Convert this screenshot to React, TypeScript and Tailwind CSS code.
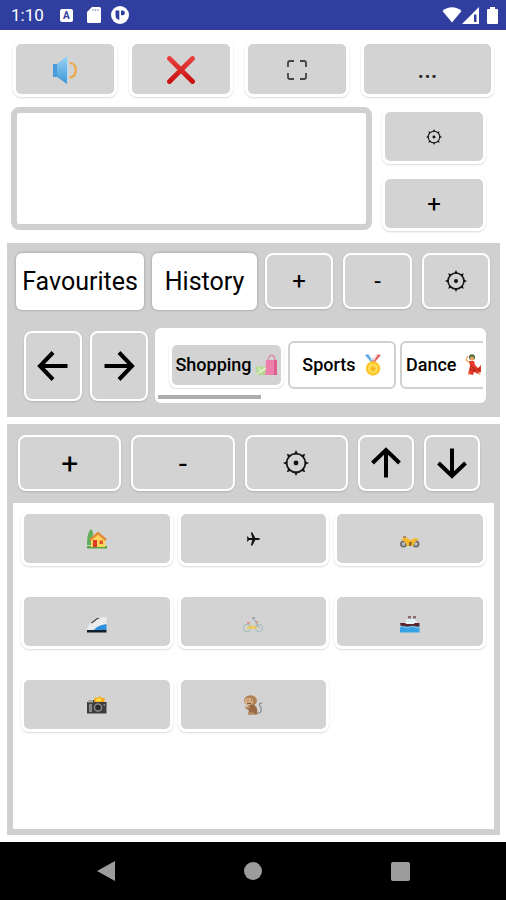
import type { ReactNode } from 'react'
import clsx from 'clsx'

interface KeyProps {
  label: string
  children: ReactNode
  className?: string
  thin?: boolean
}

function Key({ label, children, className, thin }: KeyProps) {
  return (
    <button
      type="button"
      aria-label={label}
      className={clsx(
        'flex items-center justify-center rounded-lg border-white bg-[#d3d3d3] text-black',
        thin
          ? 'border-2 shadow-[0_1px_2px_rgba(0,0,0,0.15)]'
          : 'border-[3px] shadow-[0_1px_2px_rgba(0,0,0,0.15)]',
        className
      )}
    >
      {children}
    </button>
  )
}

function GearIcon({ className }: { className: string }) {
  const angles = [0, 45, 90, 135, 180, 225, 270, 315]
  return (
    <svg viewBox="0 0 26 26" className={className} aria-hidden="true">
      <circle cx="13" cy="13" r="9.4" fill="none" stroke="#1a1a1a" strokeWidth="1.8" />
      <circle cx="13" cy="13" r="2.4" fill="#111" />
      {angles.map((a) => (
        <path key={a} d="M11 4.2 13 0l2 4.2z" fill="#111" transform={`rotate(${a} 13 13)`} />
      ))}
    </svg>
  )
}

function ArrowIcon({ direction }: { direction: 'left' | 'right' | 'up' | 'down' }) {
  const rotation = { right: 0, down: 90, left: 180, up: 270 }[direction]
  return (
    <svg viewBox="0 0 32 32" className="size-8" aria-hidden="true">
      <path
        d="M1.5 16h27M16 2.5 29 16 16 29.5"
        fill="none"
        stroke="#000"
        strokeWidth="4"
        transform={`rotate(${rotation} 16 16)`}
      />
    </svg>
  )
}

function SpeakerIcon() {
  return (
    <svg viewBox="0 0 26 30" className="h-[30px] w-[26px]" aria-hidden="true">
      <defs>
        <linearGradient id="cone" x1="0" y1="0" x2="0" y2="1">
          <stop offset="0" stopColor="#9ad4f6" />
          <stop offset="1" stopColor="#3d97d8" />
        </linearGradient>
      </defs>
      <path d="M1 9h5v13H1z" fill="#4a9bd9" />
      <path d="M5 9 15 1v28L5 22z" fill="url(#cone)" />
      <path d="M15 1c1.5 4 1.5 24 0 28z" fill="#b9dcf2" />
      <path d="M18.500 8c7 1 7 13 0 14.500" fill="none" stroke="#eba843" strokeWidth="2.2" strokeLinecap="round" />
    </svg>
  )
}

function CrossIcon() {
  return (
    <svg viewBox="0 0 28 28" className="size-7" aria-hidden="true">
      <defs>
        <linearGradient id="cross" x1="0" y1="0" x2="0" y2="28" gradientUnits="userSpaceOnUse">
          <stop offset="0" stopColor="#ea4444" />
          <stop offset="1" stopColor="#c80c0c" />
        </linearGradient>
      </defs>
      <path d="m2.500 2.500 23 23M25.500 2.500l-23 23" stroke="url(#cross)" strokeWidth="4.800" strokeLinecap="round" />
    </svg>
  )
}

function FullscreenIcon() {
  return (
    <svg viewBox="0 0 20 20" className="size-5" fill="none" stroke="#444" strokeWidth="1.8" aria-hidden="true">
      <path d="M1 7V3q0-2 2-2h4M13 1h4q2 0 2 2v4M19 13v4q0 2-2 2h-4M7 19H3q-2 0-2-2v-4" />
    </svg>
  )
}

function BagsIcon() {
  return (
    <svg viewBox="0 0 22 22" className="size-[22px]" aria-hidden="true">
      <path d="M12 8c0-9 7-9 7 0" fill="none" stroke="#d98aa8" strokeWidth="1.3" />
      <path d="M10 6h11v15H9z" fill="#ee7fab" />
      <path d="M18 6h3v15h-3z" fill="#de5f92" />
      <path d="m0 12 10 1-1 8H1z" fill="#b3d98c" />
      <path d="m2 13 3 5 5-4M1 20l8-6" fill="none" stroke="#e3f1cf" strokeWidth="1.2" />
    </svg>
  )
}

function MedalIcon() {
  return (
    <svg viewBox="0 0 18 22" className="h-[22px] w-[18px]" aria-hidden="true">
      <path d="m1 1 4-1 6 8H7z" fill="#5aa5e6" />
      <path d="m17 1-4-1-6 8h4z" fill="#e3685e" />
      <path d="m4 0 2 0 3 6-1 1z" fill="#e8f0f8" />
      <path d="m14 0-2 0-3 6 1 1z" fill="#f6e2e2" />
      <circle cx="9" cy="14.5" r="7.2" fill="#fcc52c" />
      <circle cx="9" cy="14.500" r="5" fill="#ffdd52" />
      <path d="m9 11 1 2.500 2.600.2-2 1.700.6 2.600L9 16.600 6.800 18l.6-2.600-2-1.700 2.600-.2z" fill="#f6b520" />
    </svg>
  )
}

function DancerIcon() {
  return (
    <svg viewBox="0 0 18 22" className="h-[22px] w-[18px] shrink-0" aria-hidden="true">
      <circle cx="7" cy="3.2" r="3" fill="#4f6b35" />
      <circle cx="7" cy="4.500" r="2" fill="#f0a468" />
      <path d="M3 2 1 6l4 3" fill="none" stroke="#f0b478" strokeWidth="1.5" />
      <path d="M4 7h5l1 4 3 3 3-3v7l-3 2-4-2-1 3-5-1 2-8z" fill="#e23b2c" />
      <path d="M6 12l6 5M5 15l5 2M13 14l2 4" stroke="#a81f18" strokeWidth="1" />
      <path d="m4 19-1 2M14 18l1 3" stroke="#f0b478" strokeWidth="1.4" />
    </svg>
  )
}

function HouseIcon() {
  return (
    <svg viewBox="0 0 20 20" className="size-5" aria-hidden="true">
      <path d="M4 0C1 3 0 8 0 16h6V3z" fill="#5fae58" />
      <path d="M0 17h20v2.5H0z" fill="#5da542" />
      <path d="M4 9.500 11 4l7 5.500V18H4z" fill="#ffd45a" />
      <path d="m3 11 8-7 8 7" fill="none" stroke="#e08a3c" strokeWidth="2.400" />
      <path d="M6 11h4v7H6z" fill="#dc3a26" />
      <path d="M12.500 11.500H16V15h-3.500z" fill="#e0562c" />
    </svg>
  )
}

function PlaneIcon() {
  return (
    <svg viewBox="0 0 14 14" className="size-3.5" aria-hidden="true">
      <path
        d="M14 7c0 .7-1.200.9-2.500.9H9.300L6.400 13.500H4.800L6.300 7.900H3L1.700 9.500H.9l.500-2.500-.5-2.500h.8L3 6.100h3.300L4.800.5h1.600l2.900 5.600h2.200C12.800 6.100 14 6.300 14 7z"
        fill="#111"
      />
    </svg>
  )
}

function MotorcycleIcon() {
  return (
    <svg viewBox="0 0 20 12" className="h-3 w-5" aria-hidden="true">
      <g fill="#b5b5b5" stroke="#666" strokeWidth="1.5">
        <circle cx="3.500" cy="8" r="2.700" />
        <circle cx="16" cy="8" r="2.700" />
      </g>
      <path d="M1 3.500 6 1l4 3 5-2 4 1-4 3-2 4H7L5 6z" fill="#f5b930" />
      <path d="M9 6h3l-1 4H9z" fill="#8a6326" />
      <path d="m3 1 3 0" fill="none" stroke="#8a6326" strokeWidth="1.2" />
    </svg>
  )
}

function TrainIcon() {
  return (
    <svg viewBox="0 0 20 16" className="h-4 w-5" aria-hidden="true">
      <path d="M0 12C3 4 9 0 19.500 0v14H0z" fill="#e9ebec" />
      <path d="M7 13c2-3 6-5 12.500-6v6z" fill="#2d8fdc" />
      <path d="m4 5.500 6-4.500 3 0-3 1.500-5 4z" fill="#444" />
      <path d="M0 13h19.5v2.5H0z" fill="#111e2c" />
    </svg>
  )
}

function BicycleIcon() {
  return (
    <svg viewBox="0 0 20 16" className="h-4 w-5" fill="none" aria-hidden="true">
      <circle cx="4" cy="11" r="3.5" stroke="#a3bdb2" strokeWidth="1.1" />
      <circle cx="16" cy="11" r="3.5" stroke="#a9bcc2" strokeWidth="1.1" />
      <path d="m4 11 5-2 5 2H9z" stroke="#eecb58" strokeWidth="1.6" />
      <path d="m16 11-5-9" stroke="#9cb6c4" strokeWidth="1.2" />
      <path d="M9 1h3" stroke="#888" strokeWidth="1.2" />
      <path d="m12.500 4 2.500 2M4 6h3" stroke="#e08a74" strokeWidth="1.400" />
    </svg>
  )
}

function ShipIcon() {
  return (
    <svg viewBox="0 0 20 17" className="h-[17px] w-5" aria-hidden="true">
      <path d="M4 8 7 3h8l3 5z" fill="#dceef0" />
      <path d="M8 0h3v2.5H8zM13 0h3v2.500h-3z" fill="#8a6c72" />
      <path d="M0 7h19.5v4H1z" fill="#5b2630" />
      <path d="M5 6h10l-1 2H6z" fill="#e8f4f6" />
      <path d="M0 10.500h19.500v6H0z" fill="#35a3e4" />
      <path d="M0 11q2.500-1.500 5 0t5 0 5 0 4.500 0" fill="none" stroke="#8ccdf2" strokeWidth="1" />
    </svg>
  )
}

function CameraIcon() {
  return (
    <svg viewBox="0 0 20 18" className="h-[18px] w-5" aria-hidden="true">
      <path d="M0 6h4l2-2h8l2 2h3.5v11.500H0z" fill="#3d3d3d" />
      <path d="M1 4h5v2.500H1z" fill="#aaa" />
      <path d="m8 1 3 1 2-2 2 2 3 0-1 4H7z" fill="#fba91c" />
      <path d="m9 3 5-1v3.500H9z" fill="#ffdf3d" />
      <circle cx="11" cy="11.500" r="4.300" fill="#8a8a8a" />
      <circle cx="11" cy="11.500" r="2.800" fill="#292929" />
      <path d="M2 8h3v8H2zM16.500 8H18v2h-1.500z" fill="#888" />
    </svg>
  )
}

function MonkeyIcon() {
  return (
    <svg viewBox="0 0 20 20" className="size-5" aria-hidden="true">
      <path d="M14 18c5 1 5-5 3-7s1-4 2-2" fill="none" stroke="#8d8d8d" strokeWidth="1.2" />
      <ellipse cx="7.500" cy="5.500" rx="6.500" ry="5.300" fill="#b08258" />
      <ellipse cx="5.800" cy="6.500" rx="4.200" ry="3.400" fill="#dcb389" />
      <path d="M4.500 5.200h1M8 5.200h1M4 8q2 1 4 0" fill="none" stroke="#6d4628" strokeWidth="1" />
      <path d="M7 10c7-1 8 4 7 9.500H5l1-4-3-2z" fill="#996a45" />
      <path d="M2 12.500h5M5 18.500h6" stroke="#bd9068" strokeWidth="2" />
    </svg>
  )
}

function StatusBar() {
  return (
    <header className="flex h-[30px] items-center justify-between bg-[#303f9f] pr-2 pl-[11px] text-white">
      <div className="flex items-center gap-4">
        <span className="text-[17px] leading-5">1:10</span>
        <div className="flex items-center gap-3.5">
          <span className="flex size-[13px] items-center justify-center rounded-xs bg-white text-[10px] font-bold text-[#303f9f]">
            A
          </span>
          <svg viewBox="0 0 14 16" className="h-4 w-3.5" aria-hidden="true">
            <path d="M5 0h7.500Q14 0 14 1.500v13q0 1.500-1.500 1.500h-11Q0 16 0 14.500V5z" fill="#fff" />
            <path d="M6 2v2M8.500 2v2M11 2v2" stroke="#9ba3d6" strokeWidth="1.200" />
          </svg>
          <svg viewBox="0 0 18 18" className="-ml-1 size-[18px]" aria-hidden="true">
            <circle cx="9" cy="9" r="9" fill="#fff" />
            <path d="M4.500 4.500h3.800v9.500C5.500 13.500 4.500 11.500 4.500 9zM10 4.500h1.500a2.300 2.300 0 0 1 0 4.800H10z" fill="#303f9f" />
          </svg>
        </div>
      </div>
      <div className="flex items-center">
        <svg viewBox="0 0 20 16" className="h-4 w-5" aria-hidden="true">
          <path d="M.5 4C6-1 14-1 19.500 4L10 15.500z" fill="#fff" />
        </svg>
        <svg viewBox="0 0 17 17" className="mr-2 h-[17px] w-[17px]" aria-hidden="true">
          <path d="M0 17 17 0v17z" fill="#fff" />
          <path d="M12 7.500h2.500V15H12z" fill="#303f9f" />
        </svg>
        <svg viewBox="0 0 11 17" className="h-[17px] w-[11px]" aria-hidden="true">
          <path d="M3 0h5v2h2q1 0 1 1v13q0 1-1 1H1q-1 0-1-1V3q0-1 1-1h2z" fill="#fff" />
        </svg>
      </div>
    </header>
  )
}

const vehicles = [
  { name: 'Home', icon: <HouseIcon /> },
  { name: 'Plane', icon: <PlaneIcon /> },
  { name: 'Motorcycle', icon: <MotorcycleIcon />, low: true },
  { name: 'Train', icon: <TrainIcon />, low: true },
  { name: 'Bicycle', icon: <BicycleIcon />, low: true },
  { name: 'Ship', icon: <ShipIcon />, low: true },
  { name: 'Camera', icon: <CameraIcon /> },
  { name: 'Monkey', icon: <MonkeyIcon /> },
]

export default function App() {
  return (
    <div className="flex min-h-screen flex-col bg-white font-[Roboto,sans-serif] text-black">
      <StatusBar />

      <main className="flex flex-1 flex-col pt-[11px] pb-[7px]">
        <div className="grid grid-cols-[104fr_104fr_104fr_133fr] gap-3 pr-3 pl-[13px]">
          <Key label="Speak" className="h-14 pt-0.5"><SpeakerIcon /></Key>
          <Key label="Clear" className="h-14 pt-0.5"><CrossIcon /></Key>
          <Key label="Fullscreen" className="h-14 pt-0.5"><FullscreenIcon /></Key>
          <Key label="More" className="h-14 pt-0.5 text-2xl font-medium text-neutral-800">...</Key>
        </div>

        <div className="mt-2.5 flex gap-2.5 pr-5 pl-[11px]">
          <textarea
            aria-label="Message"
            className="h-[123px] min-w-0 flex-1 resize-none rounded-lg border-[6px] border-[#d0d0d0] bg-white p-2 text-xl outline-none"
          />
          <div className="flex w-[104px] flex-col gap-3 pt-0.5">
            <Key label="Message settings" className="h-[55px]"><GearIcon className="size-4" /></Key>
            <Key label="Add message" className="h-[55px] text-2xl">+</Key>
          </div>
        </div>

        {/* Category panel */}
        <section className="mr-1.5 ml-[7px] mt-3 bg-[#d0d0d0] pt-2.5 pr-2.5 pb-3.5 pl-[9px]">
          <div className="flex gap-2">
            <button type="button" className="h-[57px] w-32 rounded-md bg-white text-[25px] shadow-[0_0_3px_rgba(0,0,0,0.3)]">
              Favourites
            </button>
            <button type="button" className="h-[57px] w-[105px] rounded-md bg-white text-[25px] shadow-[0_0_3px_rgba(0,0,0,0.3)]">
              History
            </button>
            <div className="grid flex-1 grid-cols-3 gap-2.5">
              <Key thin label="Add category" className="h-14 text-2xl">+</Key>
              <Key thin label="Remove category" className="h-14 text-2xl">-</Key>
              <Key thin label="Category settings" className="h-14"><GearIcon className="size-[22px]" /></Key>
            </div>
          </div>

          <div className="mt-[18px] flex items-center pr-1 pl-2">
            <div className="mr-[7px] flex gap-2">
              <Key thin label="Previous" className="h-[70px] w-[58px]"><ArrowIcon direction="left" /></Key>
              <Key thin label="Next" className="h-[70px] w-[58px]"><ArrowIcon direction="right" /></Key>
            </div>
            <div className="h-[75px] min-w-0 flex-1 overflow-hidden rounded-md bg-white px-[3px] pt-[13px]">
              <div className="flex items-center gap-1 overflow-hidden pl-[11px] text-lg font-medium">
                <Key label="Shopping" className="h-[46px] w-[115px] shrink-0 gap-1">
                  Shopping <BagsIcon />
                </Key>
                <button
                  type="button"
                  className="flex h-12 w-[108px] shrink-0 items-center justify-center gap-2 rounded-md border-2 border-[#d0d0d0] bg-white"
                >
                  Sports <MedalIcon />
                </button>
                <button
                  type="button"
                  className="flex h-12 w-[108px] shrink-0 items-center gap-2 rounded-md border-2 border-[#d0d0d0] bg-white pl-1"
                >
                  Dance <DancerIcon />
                </button>
              </div>
              <div className="mt-[6px] h-[4px] w-[103px] bg-[#adadad]" />
            </div>
          </div>
        </section>

        {/* Item panel */}
        <section className="mr-1.5 ml-[7px] mt-[7px] flex flex-1 flex-col bg-[#d0d0d0] px-1.5 pt-[11px] pb-1.5">
          <div className="flex gap-2.5 pr-3.5 pl-[5px]">
            <div className="grid flex-1 grid-cols-3 gap-2.5">
              <Key thin label="Add item" className="h-14 text-[30px]">+</Key>
              <Key thin label="Remove item" className="h-14 text-[30px]">-</Key>
              <Key thin label="Item settings" className="h-14"><GearIcon className="size-[26px]" /></Key>
            </div>
            <Key thin label="Move up" className="h-14 w-14"><ArrowIcon direction="up" /></Key>
            <Key thin label="Move down" className="h-14 w-14"><ArrowIcon direction="down" /></Key>
          </div>

          <div className="mt-3 flex-1 bg-white px-2 pt-2">
            <div className="grid grid-cols-3 gap-x-[5px] gap-y-7">
              {vehicles.map((item) => (
                <Key key={item.name} label={item.name} className={clsx('h-[55px]', item.low && 'pt-1.5')}>
                  {item.icon}
                </Key>
              ))}
            </div>
          </div>
        </section>
      </main>

      <nav className="grid h-[58px] grid-cols-[212fr_82fr_212fr] items-center bg-black">
        <button type="button" aria-label="Back" className="justify-self-center">
          <svg viewBox="0 0 18 20" className="h-5 w-[18px]"><path d="M0 10 18 0v20z" fill="#9c9c9c" /></svg>
        </button>
        <button type="button" aria-label="Home screen" className="size-[18px] justify-self-center rounded-full bg-[#9c9c9c]" />
        <button type="button" aria-label="Recent apps" className="size-[19px] justify-self-center rounded-xs bg-[#9c9c9c]" />
      </nav>
    </div>
  )
}
